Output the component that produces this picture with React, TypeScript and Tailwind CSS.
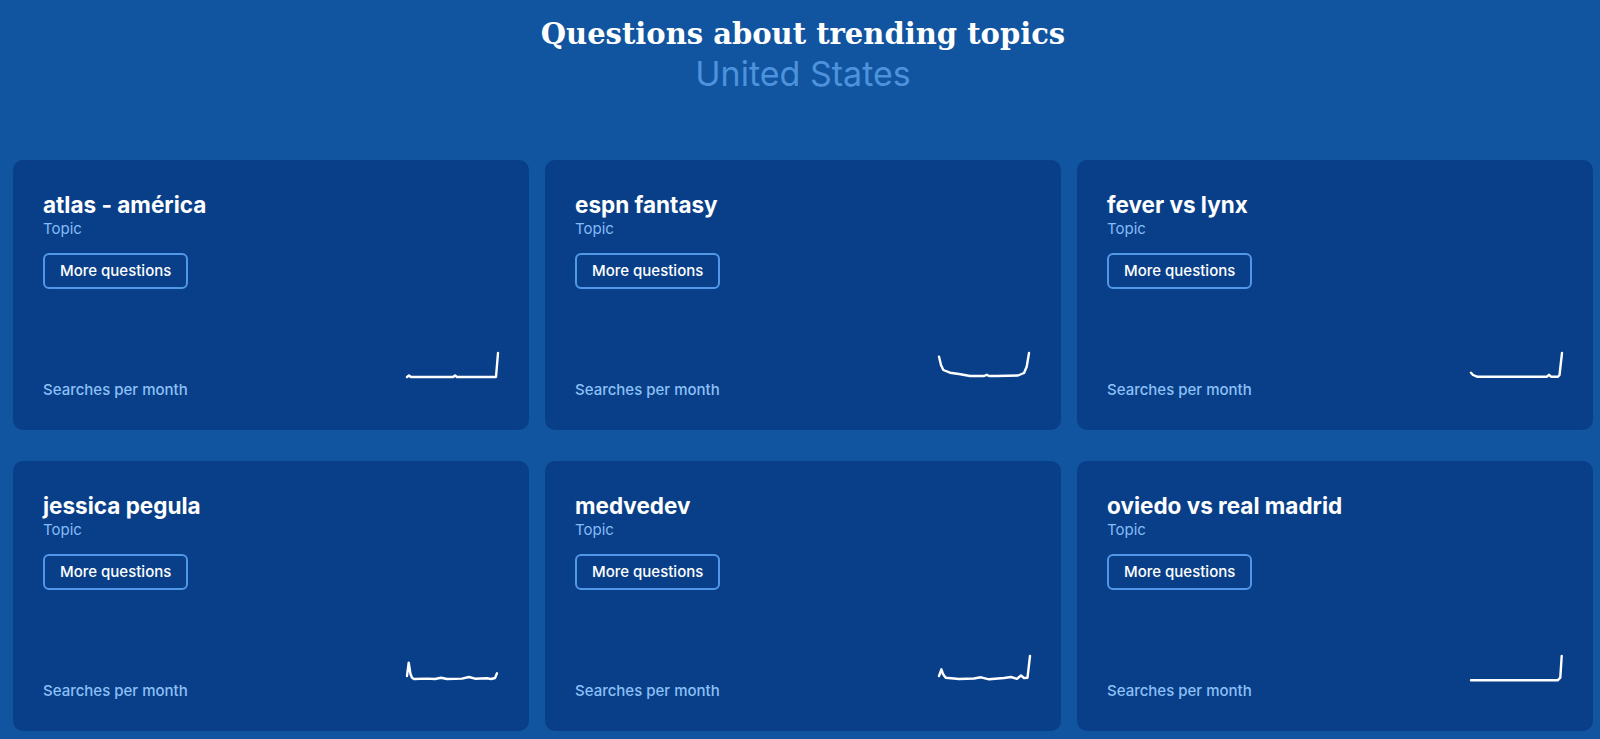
const topics = [
  {
    name: "atlas - américa",
    points:
      "0,24 2,22.5 4,24 46,24 48,22.5 50,24 89,24 91,0",
  },
  {
    name: "espn fantasy",
    points:
      "0,3.7 2,12 4.3,17 11,19.7 20,21 31,23 45,23 47.7,21.8 50,23 57.7,23 79,22.5 85,20 87.7,13.7 90,0",
  },
  {
    name: "fever vs lynx",
    points: "0,19.7 2,22 6,23.7 76,23.7 78,21.8 80,23.7 87,23.7 88.5,22 91,0",
  },
  {
    name: "jessica pegula",
    points:
      "0,22 1.7,8.7 3.5,20 5,23.7 7,25 20,24.6 28,25 34,23.8 40,25 55,24.6 62,23 68,24.7 80,24.2 84,25 88,24 90,19.3",
  },
  {
    name: "medvedev",
    points:
      "0,22 2.4,15.3 4,20 6.7,23.7 20,25 35,24.5 42,23.3 50,25.3 65,24 72,23 78,24.8 82,21.5 85,24 88.5,23.7 91,2",
  },
  {
    name: "oviedo vs real madrid",
    points: "0,26.3 86.7,26.3 89.3,23.7 90.7,2",
  },
];

function Sparkline({ points }: { points: string }) {
  return (
    <svg
      width="92"
      height="28"
      viewBox="0 0 92 28"
      fill="none"
      className="mb-[20px] overflow-visible"
    >
      <polyline
        points={points}
        stroke="#ffffff"
        strokeWidth="2.4"
        strokeLinejoin="round"
        strokeLinecap="round"
      />
    </svg>
  );
}

function TopicCard({ name, points }: { name: string; points: string }) {
  return (
    <div className="flex h-[270px] flex-col rounded-[10px] bg-[#093f88] px-[30px] pt-[31px] pb-[29px]">
      <div className="flex flex-col items-start">
        <h2 className="text-[22.5px] leading-7 font-bold text-white">{name}</h2>
        <span className="text-[15px] leading-5 text-[#86bbf7]">Topic</span>
        <button className="mt-[14px] h-[36px] rounded-md border-2 border-[#5298e8] px-[15px] text-[15px] font-medium text-white">
          More questions
        </button>
      </div>
      <div className="mt-auto flex items-end justify-between">
        <span className="text-[15px] leading-[22px] font-medium text-[#8cc0f7]">
          Searches per month
        </span>
        <Sparkline points={points} />
      </div>
    </div>
  );
}

export default function App() {
  return (
    <div
      className="min-h-[739px] w-full bg-[#1155a0] pt-[14px] pl-[13px] pr-[7px]"
      style={{ fontFamily: "Inter, 'Noto Sans', sans-serif" }}
    >
      <header className="mb-[66px] flex flex-col items-center">
        <h1
          className="text-[29px] leading-10 font-bold text-white"
          style={{ fontFamily: "'DejaVu Serif', 'Liberation Serif', serif" }}
        >
          Questions about trending topics
        </h1>
        <p className="text-[34px] leading-10 text-[#4d92dc]">United States</p>
      </header>
      <div className="grid grid-cols-3 gap-x-4 gap-y-[31px]">
        {topics.map((t) => (
          <TopicCard key={t.name} name={t.name} points={t.points} />
        ))}
      </div>
    </div>
  );
}
